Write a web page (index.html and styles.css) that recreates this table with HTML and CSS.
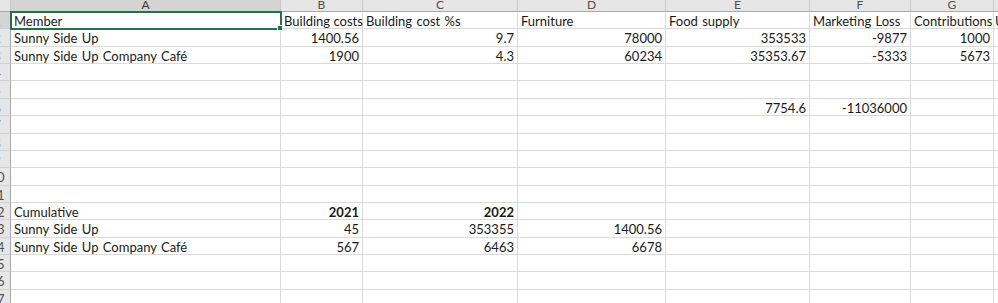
FILE: index.html
```html
<!DOCTYPE html>
<html>
<head>
<meta charset="utf-8">
<link rel="stylesheet" href="styles.css">
</head>
<body>
<div class="sheet">
  <div class="ch corner"></div>
  <div class="ch sel">A</div><div class="ch">B</div><div class="ch">C</div><div class="ch">D</div><div class="ch">E</div><div class="ch">F</div><div class="ch">G</div><div class="ch">H</div>

  <div class="rh sel"><span>1</span></div>
  <div class="c active">Member<i class="handle"></i></div><div class="c ov">Building costs</div><div class="c">Building cost %s</div><div class="c">Furniture</div><div class="c">Food supply</div><div class="c">Marketing Loss</div><div class="c">Contributions</div><div class="c edge">U</div>

  <div class="rh"><span>2</span></div>
  <div class="c">Sunny Side Up</div><div class="c n">1400.56</div><div class="c n">9.7</div><div class="c n">78000</div><div class="c n">353533</div><div class="c n">-9877</div><div class="c n">1000</div><div class="c"></div>

  <div class="rh"><span>3</span></div>
  <div class="c">Sunny Side Up Company Café</div><div class="c n">1900</div><div class="c n">4.3</div><div class="c n">60234</div><div class="c n">35353.67</div><div class="c n">-5333</div><div class="c n">5673</div><div class="c"></div>

  <div class="rh"><span>4</span></div>
  <div class="c"></div><div class="c"></div><div class="c"></div><div class="c"></div><div class="c"></div><div class="c"></div><div class="c"></div><div class="c"></div>

  <div class="rh"><span>5</span></div>
  <div class="c"></div><div class="c"></div><div class="c"></div><div class="c"></div><div class="c"></div><div class="c"></div><div class="c"></div><div class="c"></div>

  <div class="rh"><span>6</span></div>
  <div class="c"></div><div class="c"></div><div class="c"></div><div class="c"></div><div class="c n">7754.6</div><div class="c n">-11036000</div><div class="c"></div><div class="c"></div>

  <div class="rh"><span>7</span></div>
  <div class="c"></div><div class="c"></div><div class="c"></div><div class="c"></div><div class="c"></div><div class="c"></div><div class="c"></div><div class="c"></div>

  <div class="rh"><span>8</span></div>
  <div class="c"></div><div class="c"></div><div class="c"></div><div class="c"></div><div class="c"></div><div class="c"></div><div class="c"></div><div class="c"></div>

  <div class="rh"><span>9</span></div>
  <div class="c"></div><div class="c"></div><div class="c"></div><div class="c"></div><div class="c"></div><div class="c"></div><div class="c"></div><div class="c"></div>

  <div class="rh"><span>10</span></div>
  <div class="c"></div><div class="c"></div><div class="c"></div><div class="c"></div><div class="c"></div><div class="c"></div><div class="c"></div><div class="c"></div>

  <div class="rh"><span>11</span></div>
  <div class="c"></div><div class="c"></div><div class="c"></div><div class="c"></div><div class="c"></div><div class="c"></div><div class="c"></div><div class="c"></div>

  <div class="rh"><span>12</span></div>
  <div class="c">Cumulative</div><div class="c n b">2021</div><div class="c n b">2022</div><div class="c"></div><div class="c"></div><div class="c"></div><div class="c"></div><div class="c"></div>

  <div class="rh"><span>13</span></div>
  <div class="c">Sunny Side Up</div><div class="c n">45</div><div class="c n">353355</div><div class="c n">1400.56</div><div class="c"></div><div class="c"></div><div class="c"></div><div class="c"></div>

  <div class="rh"><span>14</span></div>
  <div class="c">Sunny Side Up Company Café</div><div class="c n">567</div><div class="c n">6463</div><div class="c n">6678</div><div class="c"></div><div class="c"></div><div class="c"></div><div class="c"></div>

  <div class="rh"><span>15</span></div>
  <div class="c"></div><div class="c"></div><div class="c"></div><div class="c"></div><div class="c"></div><div class="c"></div><div class="c"></div><div class="c"></div>

  <div class="rh"><span>16</span></div>
  <div class="c"></div><div class="c"></div><div class="c"></div><div class="c"></div><div class="c"></div><div class="c"></div><div class="c"></div><div class="c"></div>

  <div class="rh"><span>17</span></div>
  <div class="c"></div><div class="c"></div><div class="c"></div><div class="c"></div><div class="c"></div><div class="c"></div><div class="c"></div><div class="c"></div>
</div>
</body>
</html>
```

FILE: styles.css
```css
html, body {
  margin: 0;
  padding: 0;
  background: #ffffff;
  overflow: hidden;
}
.sheet {
  display: grid;
  grid-template-columns: 11px 270px 82px 155px 148px 144px 101px 83px 60px;
  grid-template-rows: 12px repeat(17, 17.36px);
  width: 1054px;
  font-family: Lato, "Liberation Sans", sans-serif;
  font-size: 13px;
  color: #1a1a1a;
}
.ch {
  background: #e6e6e6;
  border-right: 1px solid #c8c8c8;
  border-bottom: 1px solid #a9a9a9;
  box-sizing: border-box;
  text-align: center;
  color: #505050;
  font-size: 12px;
  line-height: 9px;
  overflow: hidden;
}
.ch.corner { background: #e6e6e6; }
.ch.sel { background: #d4d4d4; border-bottom: 1px solid #6a9a7f; color: #3a3a3a; }
.rh {
  background: #e6e6e6;
  border-right: 1px solid #a9a9a9;
  border-bottom: 1px solid #d0d0d0;
  box-sizing: border-box;
  overflow: hidden;
  color: #505050;
  font-size: 13px;
  line-height: 17px;
  padding-top: 1px;
}
.rh.sel { background: #d4d4d4; }
.rh span {
  display: block;
  width: 26px;
  margin-left: -16px;
  text-align: center;
}
.c {
  border-right: 1px solid #dadada;
  border-bottom: 1px solid #dadada;
  box-sizing: border-box;
  padding: 1px 3px 0;
  line-height: 17px;
  white-space: nowrap;
  overflow: hidden;
  position: relative;
  word-spacing: 1px;
}
.c.ov { overflow: visible; z-index: 1; word-spacing: 0; }
.c.edge { padding-left: 1px; }
.c.n { text-align: right; }
.c.b { font-weight: bold; }
.c.active {
  overflow: visible;
  outline: 2px solid #217346;
  outline-offset: -1px;
  z-index: 2;
}
.handle {
  position: absolute;
  right: -3px;
  bottom: -3px;
  width: 4px;
  height: 4px;
  background: #217346;
  border: 1px solid #ffffff;
}
```
